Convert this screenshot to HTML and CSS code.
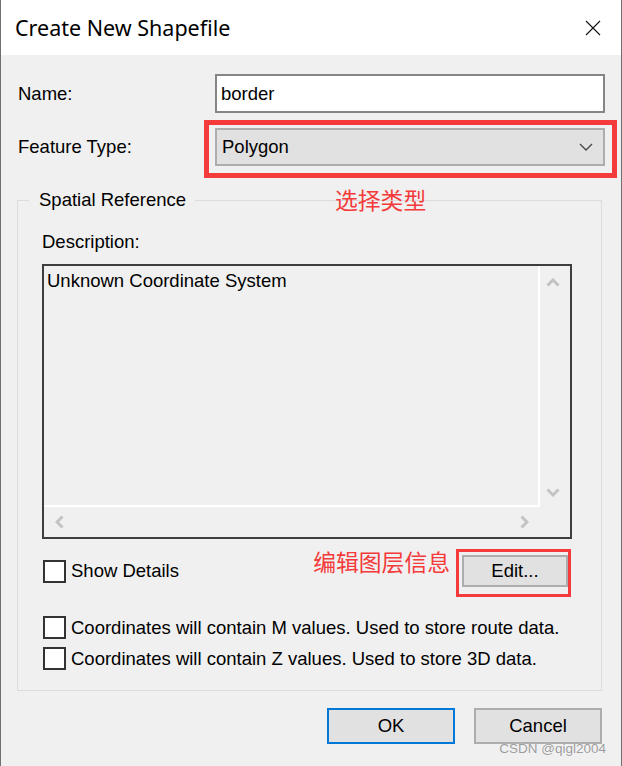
FILE: index.html
```html
<!DOCTYPE html>
<html lang="en">
<head>
<meta charset="utf-8">
<title>Create New Shapefile</title>
<link rel="stylesheet" href="styles.css">
</head>
<body>
<div class="window">
  <header class="titlebar">
    <span class="title">Create New Shapefile</span>
    <span class="close" aria-label="Close">
      <svg width="16" height="16" viewBox="0 0 16 16"><path d="M1 1L15 15M15 1L1 15" stroke="#111" stroke-width="1.1" fill="none"/></svg>
    </span>
  </header>
  <main class="content">
    <div class="form-grid">
      <label class="lbl">Name:</label>
      <div class="textbox">border</div>
      <label class="lbl">Feature Type:</label>
      <div class="combo-wrap">
        <div class="combo">
          <span>Polygon</span>
          <svg width="14" height="8" viewBox="0 0 14 8"><path d="M1 1L7 7L13 1" stroke="#444" stroke-width="1.3" fill="none"/></svg>
        </div>
      </div>
    </div>
    <fieldset class="group">
      <legend>Spatial Reference</legend>
      <span class="note note-type">选择类型</span>
      <div class="group-body">
        <div class="desc-label">Description:</div>
        <div class="desc-box">
          <div class="desc-text">Unknown Coordinate System</div>
          <div class="vscroll">
            <svg width="14" height="9" viewBox="0 0 14 9"><path d="M1.5 7.5L7 2L12.5 7.5" stroke="#c3c3c3" stroke-width="3" fill="none"/></svg>
            <svg width="14" height="9" viewBox="0 0 14 9"><path d="M1.5 1.5L7 7L12.5 1.5" stroke="#c3c3c3" stroke-width="3" fill="none"/></svg>
          </div>
          <div class="hscroll">
            <svg width="9" height="14" viewBox="0 0 9 14"><path d="M7.5 1.5L2 7L7.5 12.5" stroke="#c3c3c3" stroke-width="3" fill="none"/></svg>
            <svg width="9" height="14" viewBox="0 0 9 14"><path d="M1.5 1.5L7 7L1.5 12.5" stroke="#c3c3c3" stroke-width="3" fill="none"/></svg>
          </div>
          <div class="corner"></div>
        </div>
        <div class="details-row">
          <label class="check"><span class="box"></span><span>Show Details</span></label>
          <span class="note note-edit">编辑图层信息</span>
          <div class="edit-wrap"><button class="btn edit" type="button">Edit...</button></div>
        </div>
        <label class="check opt-m"><span class="box"></span><span>Coordinates will contain M values. Used to store route data.</span></label>
        <label class="check opt-z"><span class="box"></span><span>Coordinates will contain Z values. Used to store 3D data.</span></label>
      </div>
    </fieldset>
    <div class="footer">
      <button class="btn ok" type="button">OK</button>
      <button class="btn" type="button">Cancel</button>
    </div>
  </main>
  <span class="watermark">CSDN @qigl2004</span>
</div>
</body>
</html>
```

FILE: styles.css
```css
* { box-sizing: border-box; }
html, body { margin: 0; padding: 0; }
body {
  width: 622px;
  height: 766px;
  overflow: hidden;
  background: #f0f0f0;
  font-family: "Liberation Sans", Arial, sans-serif;
  font-size: 18.5px;
  color: #000;
}
.window {
  position: relative;
  width: 622px;
  height: 766px;
  border-left: 1px solid #707070;
  border-right: 1px solid #707070;
  background: #f0f0f0;
  display: flex;
  flex-direction: column;
}
.titlebar {
  height: 55px;
  flex: none;
  background: #fff;
  display: flex;
  align-items: center;
  justify-content: space-between;
  padding: 0 20px 0 14px;
}
.title {
  font-family: "Noto Sans", "Open Sans", sans-serif;
  font-size: 21.5px;
  line-height: 26px;
  color: #000;
}
.close { display: flex; }

.content { flex: 1; padding: 19px 16px 0 16px; }

.form-grid {
  display: grid;
  grid-template-columns: 198px 1fr;
  grid-template-rows: 39px 38px;
  row-gap: 15px;
  align-items: center;
}
.lbl { padding-left: 1px; line-height: 22px; }
.textbox {
  height: 39px;
  background: #fff;
  border: 2px solid #868686;
  padding-left: 4px;
  display: flex;
  align-items: center;
}
.combo-wrap { position: relative; height: 38px; }
.combo-wrap::after {
  content: "";
  position: absolute;
  left: -11px; right: -12px; top: -8px; bottom: -12px;
  border: 5px solid #f43a3a;
  pointer-events: none;
}
.combo {
  height: 38px;
  background: #e1e1e1;
  border: 2px solid #adadad;
  display: flex;
  align-items: center;
  justify-content: space-between;
  padding: 0 10px 0 5px;
}

.group {
  position: relative;
  margin: 23px 3px 0 0;
  padding: 0;
  border: 1px solid #dcdcdc;
  min-width: 0;
}
.group legend {
  margin-left: 11px;
  padding: 0 9px 0 10px;
  line-height: 22px;
}
.note {
  font-family: "Noto Sans CJK SC", sans-serif;
  color: #f43a3a;
  font-size: 22.8px;
  line-height: 22px;
}
.note-type { position: absolute; left: 317px; top: -22px; }
.group-body { padding: 20px 29px 20px 24px; }
.desc-label { line-height: 22px; margin-bottom: 11px; }
.desc-box {
  height: 275px;
  border: 2px solid #3e3e3e;
  display: grid;
  grid-template-columns: 1fr 30px;
  grid-template-rows: 1fr 30px;
}
.desc-text {
  border-right: 2px solid #fff;
  border-bottom: 2px solid #fff;
  padding: 4px 0 0 3px;
  line-height: 22px;
}
.vscroll {
  display: flex;
  flex-direction: column;
  justify-content: space-between;
  align-items: center;
  padding: 12px 4px 10px 0;
}
.hscroll {
  display: flex;
  justify-content: space-between;
  align-items: center;
  padding: 0 11px 0 11px;
}

.check { display: flex; align-items: center; gap: 5px; line-height: 22px; }
.box {
  width: 23px; height: 23px;
  flex: none;
  background: #fff;
  border: 2px solid #333;
}
.details-row {
  margin-top: 16px;
  height: 32px;
  display: flex;
  align-items: center;
  padding: 0 4px 0 1px;
}
.details-row .check { flex: 1; }
.note-edit { align-self: flex-start; margin-top: -4px; margin-right: 12px; }
.edit-wrap { position: relative; }
.edit-wrap::after {
  content: "";
  position: absolute;
  left: -6px; right: -3px; top: -6px; bottom: -10px;
  border: 3px solid #f43a3a;
  pointer-events: none;
}
.btn {
  font-family: "Liberation Sans", Arial, sans-serif;
  font-size: 18.5px;
  color: #000;
  background: #e1e1e1;
  border: 2px solid #adadad;
  padding: 0;
  margin: 0;
}
.edit { width: 106px; height: 32px; display: block; }
.opt-m { margin-top: 29px; margin-left: 1px; }
.opt-z { margin-top: 8px; margin-left: 1px; }

.footer {
  margin-top: 17px;
  display: flex;
  justify-content: flex-end;
  gap: 19px;
  padding-right: 3px;
}
.footer .btn { width: 128px; height: 36px; }
.footer .ok { border-color: #0078d7; }

.watermark {
  position: absolute;
  right: 15px;
  bottom: 9px;
  font-family: "Liberation Sans", Arial, sans-serif;
  font-size: 13.5px;
  line-height: 16px;
  color: #9c9c9c;
  text-shadow: 0 0 1px #fff;
}
```
